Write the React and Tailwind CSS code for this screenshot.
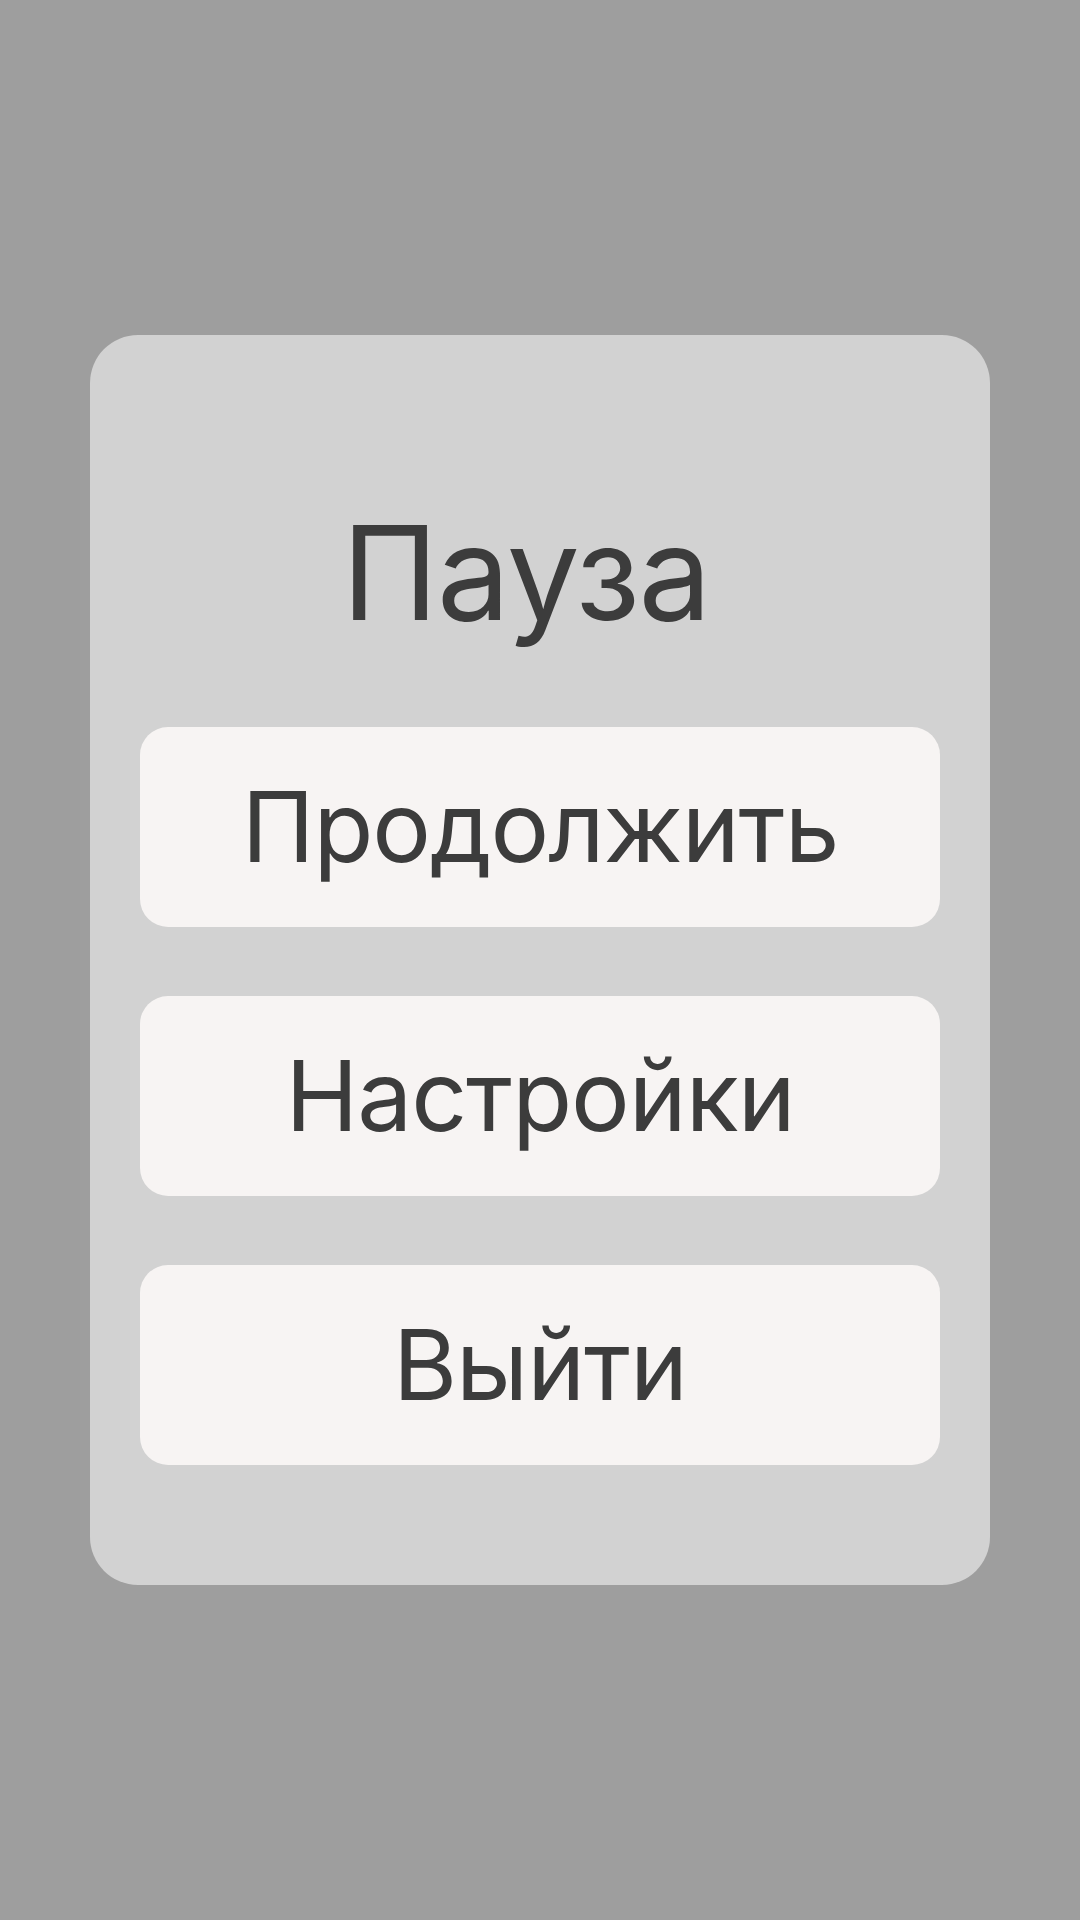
export default function App() {
  const items = ['Продолжить', 'Настройки', 'Выйти'];

  return (
    <div className="min-h-[1920px] w-full bg-[#9e9e9e] pt-[335px] font-['Inter',sans-serif]">
      <div className="mx-auto flex h-[1250px] w-[900px] flex-col rounded-[48px] bg-[#d2d2d2] px-[50px] pt-[173px]">
        <h1 className="h-[130px] pr-[28px] text-center text-[130px] font-normal leading-none tracking-[-0.011em] text-[#3c3c3c]">
          Пауза
        </h1>
        <div className="mt-[89px] flex flex-col gap-[69px]">
          {items.map((label) => (
            <button
              key={label}
              className="flex h-[200px] w-full items-center justify-center rounded-[28px] bg-[#f7f4f3] text-[98px] leading-none tracking-[-0.011em] text-[#3c3c3c]"
            >
              {label}
            </button>
          ))}
        </div>
      </div>
    </div>
  );
}
